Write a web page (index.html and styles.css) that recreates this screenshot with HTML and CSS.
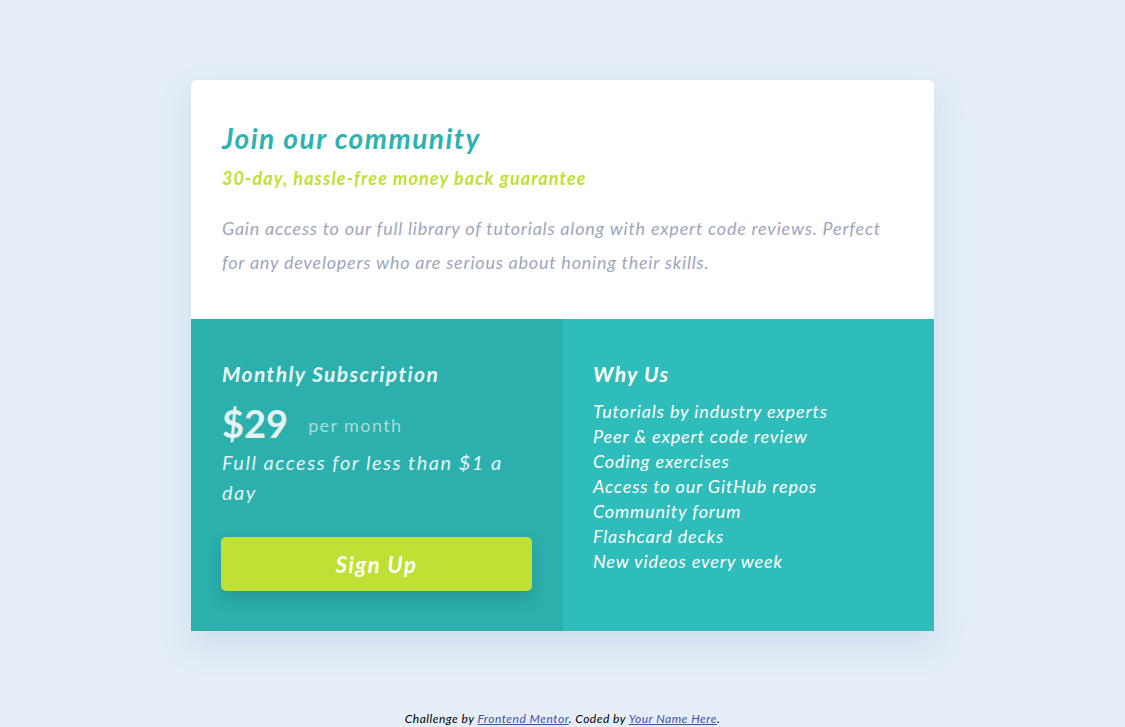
FILE: index.html
```html
<!DOCTYPE html>
<html lang="en">
<head>
<meta charset="utf-8">
<title>Frontend Mentor | Single Price Grid Component</title>
<link rel="stylesheet" href="styles.css">
</head>
<body>
<main class="page">
  <section class="card">
    <div class="intro">
      <h1 class="intro-title">Join our community</h1>
      <h2 class="intro-sub">30-day, hassle-free money back guarantee</h2>
      <p class="intro-text">Gain access to our full library of tutorials along with expert code reviews. Perfect for any developers who are serious about honing their skills.</p>
    </div>
    <div class="bottom">
      <div class="sub">
        <h3 class="sub-title">Monthly Subscription</h3>
        <div class="price-row"><span class="price">$29</span><span class="per">per month</span></div>
        <p class="sub-text">Full access for less than $1 a day</p>
        <button class="btn">Sign Up</button>
      </div>
      <div class="why">
        <h3 class="why-title">Why Us</h3>
        <ul class="why-list">
          <li>Tutorials by industry experts</li>
          <li>Peer &amp; expert code review</li>
          <li>Coding exercises</li>
          <li>Access to our GitHub repos</li>
          <li>Community forum</li>
          <li>Flashcard decks</li>
          <li>New videos every week</li>
        </ul>
      </div>
    </div>
  </section>
</main>
<footer class="attribution">
  Challenge by <a href="#">Frontend Mentor</a>. Coded by <a href="#">Your Name Here</a>.
</footer>
</body>
</html>
```
FILE: styles.css
```css
* { box-sizing: border-box; }
html, body { margin: 0; padding: 0; }
body {
  background: #e5eef6;
  font-family: Lato, "Open Sans", sans-serif;
  font-style: italic;
  min-height: 727px;
  display: flex;
  flex-direction: column;
  align-items: center;
}
.page {
  padding-top: 80px;
  height: 712px;
}
.card {
  width: 743px;
  border-radius: 6px 6px 0 0;
  overflow: hidden;
  box-shadow: 0 14px 32px rgba(100, 140, 200, 0.18);
}
.intro {
  background: #fff;
  padding: 41px 31px 0;
  height: 239px;
}
.intro-title {
  margin: 0;
  color: #2bb3b1;
  font-size: 28px;
  font-weight: 700;
  line-height: 34px;
  letter-spacing: 1.5px;
}
.intro-sub {
  margin: 11px 0 0;
  color: #bfe034;
  font-size: 18px;
  font-weight: 700;
  line-height: 24px;
  letter-spacing: 1.1px;
}
.intro-text {
  margin: 21px 0 0;
  color: #9ea6bd;
  font-size: 18px;
  line-height: 34px;
  letter-spacing: 0.76px;
}
.bottom {
  display: grid;
  grid-template-columns: 372px 371px;
  height: 312px;
}
.sub {
  background: #2bb0ad;
  padding: 42px 30px 0 31px;
  color: #fff;
}
.why {
  background: #2ebdba;
  padding: 42px 30px 0 30px;
  color: #fff;
}
.sub-title, .why-title {
  margin: 0;
  font-size: 21px;
  font-weight: 700;
  line-height: 26px;
  color: #e9f7f7;
  letter-spacing: 1.4px;
}
.why-title { color: #fff; letter-spacing: 1.3px; }
.price-row {
  display: flex;
  align-items: center;
  margin-top: 12px;
  height: 48px;
}
.price {
  font-style: normal;
  font-weight: 700;
  font-size: 38px;
  color: #e5f2f4;
}
.per {
  margin-left: 20px;
  margin-top: 3px;
  font-size: 18px;
  color: #a5dedc;
  letter-spacing: 1.4px;
  font-style: normal;
}
.sub-text {
  margin: 0;
  font-size: 20px;
  line-height: 30px;
  color: #e3f4f4;
  letter-spacing: 1.5px;
}
.btn {
  display: block;
  width: 311px;
  height: 54px;
  margin: 30px 0 0 -1px;
  border: none;
  border-radius: 5px;
  background: #bfe034;
  color: #fff;
  font-family: inherit;
  font-style: italic;
  font-size: 22px;
  font-weight: 700;
  letter-spacing: 1.5px;
  box-shadow: 0 8px 14px rgba(40, 80, 90, 0.25);
  cursor: pointer;
}
.why-list {
  list-style: none;
  margin: 12px 0 0;
  padding: 0;
  font-size: 18px;
  line-height: 25px;
  color: #fff;
  letter-spacing: 0.86px;
}
.attribution {
  font-size: 12px;
  line-height: 14px;
  color: #000;
  text-align: center;
  letter-spacing: 0.5px;
}
.attribution a { color: #3e52a3; }
```
